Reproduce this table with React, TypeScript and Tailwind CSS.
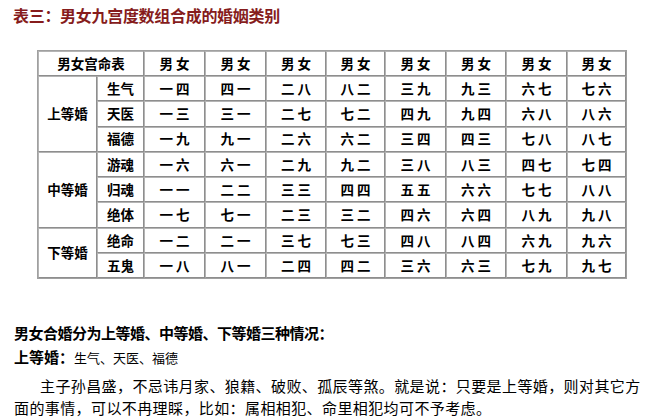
const cols = ['男 女', '男 女', '男 女', '男 女', '男 女', '男 女', '男 女', '男 女'];

const groups = [
  {
    label: '上等婚',
    rows: [
      { name: '生气', vals: ['一 四', '四 一', '二 八', '八 二', '三 九', '九 三', '六 七', '七 六'] },
      { name: '天医', vals: ['一 三', '三 一', '二 七', '七 二', '四 九', '九 四', '六 八', '八 六'] },
      { name: '福德', vals: ['一 九', '九 一', '二 六', '六 二', '三 四', '四 三', '七 八', '八 七'] },
    ],
  },
  {
    label: '中等婚',
    rows: [
      { name: '游魂', vals: ['一 六', '六 一', '二 九', '九 二', '三 八', '八 三', '四 七', '七 四'] },
      { name: '归魂', vals: ['一 一', '二 二', '三 三', '四 四', '五 五', '六 六', '七 七', '八 八'] },
      { name: '绝体', vals: ['一 七', '七 一', '二 三', '三 二', '四 六', '六 四', '八 九', '九 八'] },
    ],
  },
  {
    label: '下等婚',
    rows: [
      { name: '绝命', vals: ['一 二', '二 一', '三 七', '七 三', '四 八', '八 四', '六 九', '九 六'] },
      { name: '五鬼', vals: ['一 八', '八 一', '二 四', '四 二', '三 六', '六 三', '七 九', '九 七'] },
    ],
  },
];

const cell = 'border border-t-[#b4b4b4] border-l-[#b4b4b4] border-r-[#8e8e8e] border-b-[#8e8e8e] text-center p-0 whitespace-pre';

export default function App() {
  return (
    <div
      className="w-[651px] h-[417px] bg-white text-black overflow-hidden"
      style={{ fontFamily: '"Noto Sans CJK SC", "Noto Sans", sans-serif' }}
    >
      {/* Title */}
      <div className="pt-[5px] pl-[13px] h-[50px] text-[16px] leading-[20px] font-bold text-[#861c1c] tracking-[-0.3px]">
        表三：男女九宫度数组合成的婚姻类别
      </div>

      {/* Table */}
      <table className="ml-[37px] border-separate border-spacing-0 border border-[#a0a0a0] text-[13.5px] font-bold leading-none table-fixed w-[588px]">
        <colgroup>
          <col className="w-[59px]" />
          <col className="w-[47px]" />
          <col className="w-[61px]" />
          <col className="w-[61px]" />
          <col className="w-[60px]" />
          <col className="w-[59px]" />
          <col className="w-[61px]" />
          <col className="w-[60px]" />
          <col className="w-[61px]" />
          <col className="w-[59px]" />
        </colgroup>
        <tbody>
          <tr className="h-[25px]">
            <td colSpan={2} className={cell}>
              男女宫命表
            </td>
            {cols.map((c, i) => (
              <td key={i} className={cell}>
                {c}
              </td>
            ))}
          </tr>
          {groups.map((g) =>
            g.rows.map((r, ri) => (
              <tr key={r.name} className="h-[25.3px]">
                {ri === 0 && (
                  <td rowSpan={g.rows.length} className={cell}>
                    {g.label}
                  </td>
                )}
                <td className={cell}>{r.name}</td>
                {r.vals.map((v, i) => (
                  <td key={i} className={cell}>
                    {v}
                  </td>
                ))}
              </tr>
            ))
          )}
        </tbody>
      </table>

      {/* Notes */}
      <div className="pl-[14px] w-[644px] mt-[42px] text-[15px]">
        <p className="leading-[24px] font-bold tracking-[-0.5px]">男女合婚分为上等婚、中等婚、下等婚三种情况：</p>
        <p className="leading-[24px]">
          <span className="font-bold">上等婚：</span>
          <span className="text-[13px]">生气、天医、福德</span>
        </p>
        <p className="mt-[5px] leading-[22px] indent-[26px] tracking-[0.4px]">
          主子孙昌盛，不忌讳月家、狼籍、破败、孤辰等煞。就是说：只要是上等婚，则对其它方面的事情，可以不冉理睬，比如：属相相犯、命里相犯均可不予考虑。
        </p>
      </div>
    </div>
  );
}
